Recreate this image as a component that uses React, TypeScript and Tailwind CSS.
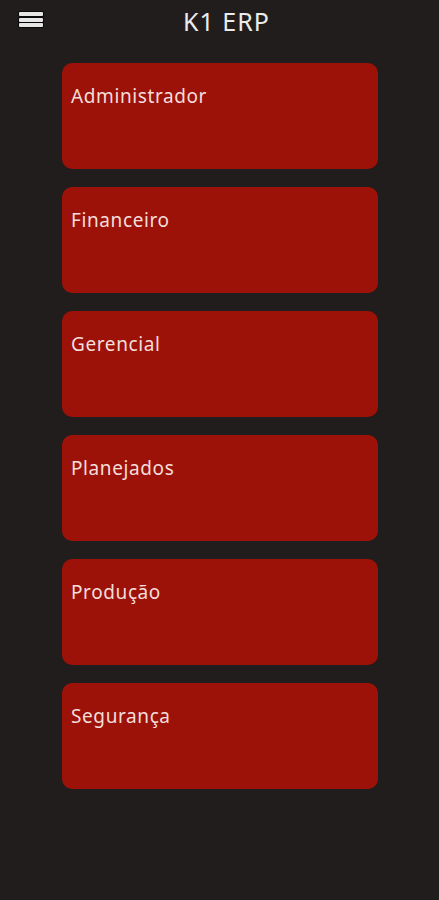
const modules = ["Administrador", "Financeiro", "Gerencial", "Planejados", "Produção", "Segurança"];

export default function App() {
  return (
    <div className="min-h-[900px] w-full bg-[#201d1c] font-['Noto_Sans',sans-serif]">
      <header className="relative flex h-[42px] items-center">
        <button className="absolute left-[19px] top-[12px] flex h-[15px] w-[24px] flex-col justify-between">
          <span className="h-[4px] w-full rounded-[1px] bg-[#e6e6e6] ring-1 ring-black/60" />
          <span className="h-[4px] w-full rounded-[1px] bg-[#e6e6e6] ring-1 ring-black/60" />
          <span className="h-[4px] w-full rounded-[1px] bg-[#e6e6e6] ring-1 ring-black/60" />
        </button>
        <h1 className="ml-[183px] text-[25px] leading-none tracking-[1px] text-[#ebebeb]">K1 ERP</h1>
      </header>

      <div className="mt-[21px] flex flex-col gap-[18px] px-[62px] pr-[61px]">
        {modules.map((m) => (
          <div key={m} className="h-[106px] rounded-[10px] bg-[#9c1208] px-[9px] pt-[21px]">
            <span className="text-[19px] leading-6 tracking-[0.6px] text-[#f3dedb]">{m}</span>
          </div>
        ))}
      </div>
    </div>
  );
}
